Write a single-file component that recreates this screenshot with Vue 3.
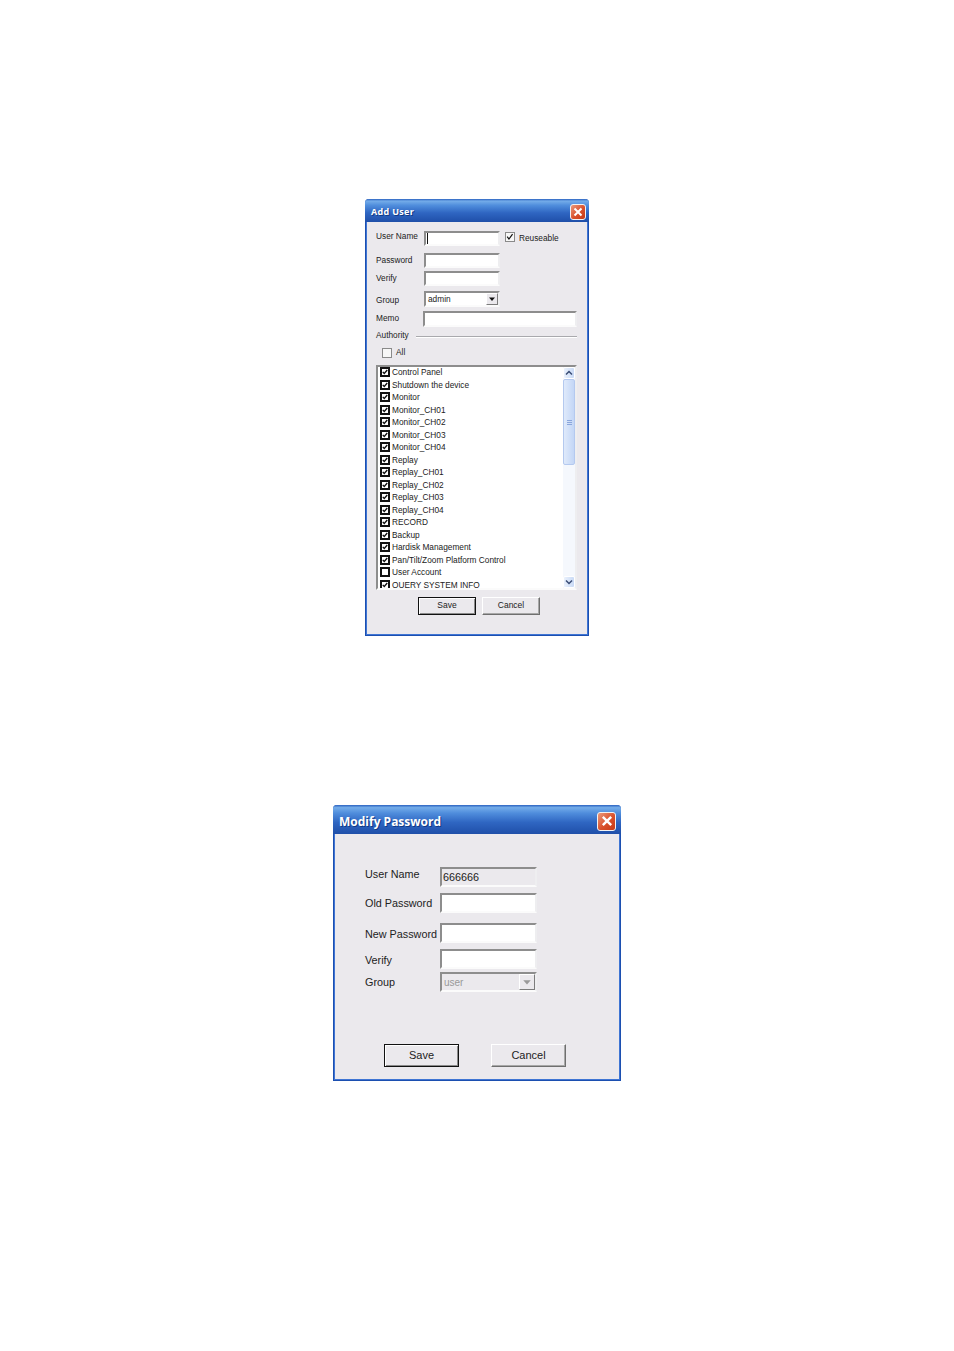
<script setup>
const authorities = [
  { name: 'Control Panel', on: true },
  { name: 'Shutdown the device', on: true },
  { name: 'Monitor', on: true },
  { name: 'Monitor_CH01', on: true },
  { name: 'Monitor_CH02', on: true },
  { name: 'Monitor_CH03', on: true },
  { name: 'Monitor_CH04', on: true },
  { name: 'Replay', on: true },
  { name: 'Replay_CH01', on: true },
  { name: 'Replay_CH02', on: true },
  { name: 'Replay_CH03', on: true },
  { name: 'Replay_CH04', on: true },
  { name: 'RECORD', on: true },
  { name: 'Backup', on: true },
  { name: 'Hardisk Management', on: true },
  { name: 'Pan/Tilt/Zoom Platform Control', on: true },
  { name: 'User Account', on: false },
  { name: 'QUERY SYSTEM INFO', on: true }
]
</script>

<template>
  <div class="page">
    <section class="dialog add-user">
      <header class="titlebar">
        <span class="title">Add User</span>
        <span class="close">
          <svg viewBox="0 0 10 10"><path d="M1.5 1.5l7 7M8.5 1.5l-7 7" /></svg>
        </span>
      </header>
      <div class="body">
        <div class="row row-name">
          <label class="lbl lbl-up">User Name</label>
          <span class="field name-field"><i class="caret"></i></span>
          <span class="check flat on">
            <svg viewBox="0 0 10 10"><path d="M1.5 4.5l2.2 3 4.5-6" /></svg>
          </span>
          <span class="lbl reuse">Reuseable</span>
        </div>
        <div class="row row-pass">
          <label class="lbl">Password</label>
          <span class="field name-field"></span>
        </div>
        <div class="row row-verify">
          <label class="lbl">Verify</label>
          <span class="field name-field"></span>
        </div>
        <div class="row row-group">
          <label class="lbl group-lbl">Group</label>
          <span class="field select">
            <span class="value">admin</span>
            <span class="drop"><svg viewBox="0 0 8 8"><path d="M1 2.5h6L4 6z" /></svg></span>
          </span>
        </div>
        <div class="row row-memo">
          <label class="lbl memo-lbl">Memo</label>
          <span class="field memo-field"></span>
        </div>
        <div class="row row-auth">
          <span class="lbl auth-lbl">Authority</span>
          <span class="rule"></span>
        </div>
        <div class="row row-all">
          <span class="check flat"></span>
          <span class="lbl all-lbl">All</span>
        </div>
        <div class="list">
          <ul class="items">
            <li v-for="item in authorities" :key="item.name" class="item">
              <span class="check" :class="{ on: item.on }">
                <svg v-if="item.on" viewBox="0 0 8 8"><path d="M1 3.8l2 2.2 4-4.6" /></svg>
              </span>
              <span>{{ item.name }}</span>
            </li>
          </ul>
          <div class="scrollbar">
            <span class="sb-btn">
              <svg viewBox="0 0 8 8"><path d="M1 5.5l3-3 3 3" /></svg>
            </span>
            <span class="sb-thumb"><i></i><i></i><i></i></span>
            <span class="sb-rest"></span>
            <span class="sb-btn">
              <svg viewBox="0 0 8 8"><path d="M1 2.5l3 3 3-3" /></svg>
            </span>
          </div>
        </div>
        <div class="buttons">
          <button class="btn default">Save</button>
          <button class="btn">Cancel</button>
        </div>
      </div>
    </section>

    <section class="dialog modify">
      <header class="titlebar">
        <span class="title">Modify Password</span>
        <span class="close">
          <svg viewBox="0 0 10 10"><path d="M1.5 1.5l7 7M8.5 1.5l-7 7" /></svg>
        </span>
      </header>
      <div class="body">
        <div class="row m-name">
          <label class="lbl lbl-up">User Name</label>
          <span class="field disabled">666666</span>
        </div>
        <div class="row m-old">
          <label class="lbl">Old Password</label>
          <span class="field"></span>
        </div>
        <div class="row m-new">
          <label class="lbl">New Password</label>
          <span class="field"></span>
        </div>
        <div class="row m-verify">
          <label class="lbl">Verify</label>
          <span class="field"></span>
        </div>
        <div class="row m-group">
          <label class="lbl">Group</label>
          <span class="field select disabled">
            <span class="value">user</span>
            <span class="drop"><svg viewBox="0 0 8 8"><path d="M1 2.5h6L4 6z" /></svg></span>
          </span>
        </div>
        <div class="buttons">
          <button class="btn default">Save</button>
          <button class="btn">Cancel</button>
        </div>
      </div>
    </section>
  </div>
</template>

<style>
html,
body {
  background: #fff;
}
</style>

<style scoped>
.page {
  height: 1351px;
  overflow: hidden;
  display: flex;
  flex-direction: column;
  align-items: flex-start;
  font-family: 'Liberation Sans', Arial, sans-serif;
  color: #222;
}

.dialog {
  box-sizing: border-box;
  display: flex;
  flex-direction: column;
  background: #ebe9ed;
  border: 1px solid #1c4fb0;
  border-top: 0;
  border-radius: 4px 4px 0 0;
  box-shadow: inset 1px 0 #3f75d4, inset -1px 0 #3f75d4, inset 0 -1px #3f75d4;
}

.titlebar {
  display: flex;
  align-items: center;
  justify-content: space-between;
  margin: 0 -1px;
  border-radius: 4px 4px 0 0;
  background: linear-gradient(#2b62c0 0, #74ace9 9%, #4f8ddc 28%, #2f66c2 60%, #1f4fa9 100%);
  color: #fff;
  font-weight: 700;
}

.title {
  text-shadow: 1px 1px 0 #123a85;
}

.close {
  box-sizing: border-box;
  display: flex;
  align-items: center;
  justify-content: center;
  border: 1px solid #f2f2f2;
  border-radius: 3px;
  background: linear-gradient(135deg, #eb9a7c, #d9502b 55%, #c63a17);
}

.close svg {
  fill: none;
  stroke: #fff;
  stroke-width: 2;
}

.body {
  flex: 1;
  display: flex;
  flex-direction: column;
}

.row {
  display: flex;
  align-items: center;
}

.lbl {
  white-space: nowrap;
}

.lbl-up {
  position: relative;
  top: -2px;
}

.field {
  box-sizing: border-box;
  display: flex;
  align-items: center;
  background: #fff;
  border: 2px solid;
  border-color: #8d8d8d #eeeef0 #fbfbfb #8d8d8d;
}

.field.disabled {
  background: #ebe9ed;
}

.select .value {
  flex: 1;
}

.drop {
  box-sizing: border-box;
  display: flex;
  align-items: center;
  justify-content: center;
  align-self: stretch;
  background: #ebe9ed;
  border: 1px solid;
  border-color: #fff #7c7c7c #7c7c7c #fff;
}

.drop svg {
  fill: #111;
}

.disabled .drop svg {
  fill: #999;
}

/* add user */
.add-user {
  width: 224px;
  height: 437px;
  margin: 199px 0 0 365px;
  font-size: 8.3px;
}

.add-user .titlebar {
  height: 23px;
  padding: 2px 3px 0 6px;
  box-sizing: border-box;
  flex: none;
}

.add-user .title {
  font-family: 'Open Sans', sans-serif;
  font-size: 9px;
  letter-spacing: 0.3px;
}

.add-user .close {
  width: 16px;
  height: 16px;
}

.add-user .close svg {
  width: 10px;
  height: 10px;
}

.add-user .body {
  padding: 9px 10px 0;
}

.add-user .lbl {
  width: 48px;
  padding-bottom: 2px;
}

.add-user .group-lbl {
  padding: 2px 0 0;
}

.name-field {
  width: 76px;
  height: 15px;
  padding-left: 1px;
}

.caret {
  width: 1px;
  height: 11px;
  background: #111;
}

.row-name {
  height: 15px;
}

.row-name .check {
  margin: -3px 0 0 5px;
}

.row-name .check svg {
  stroke-width: 1.5;
}

.add-user .reuse {
  margin-left: 4px;
  width: auto;
}

.row-pass {
  margin-top: 7px;
  height: 15px;
}

.row-verify {
  margin-top: 3px;
  height: 15px;
}

.row-group {
  margin-top: 5px;
  height: 16px;
}

.add-user .select {
  width: 76px;
  height: 16px;
  font-size: 8.3px;
  padding-left: 2px;
}

.add-user .drop {
  width: 12px;
}

.add-user .drop svg {
  width: 8px;
  height: 8px;
}

.row-memo {
  margin-top: 4px;
  height: 16px;
}

.add-user .memo-lbl {
  width: 47px;
}

.memo-field {
  width: 154px;
  height: 16px;
}

.row-auth {
  margin-top: 2px;
  height: 14px;
}

.add-user .auth-lbl {
  width: 40px;
}

.rule {
  width: 161px;
  height: 1px;
  background: #a9a9ad;
  box-shadow: 0 1px #fff;
}

.row-all {
  margin-top: 3px;
  height: 14px;
  padding-left: 6px;
}

.add-user .all-lbl {
  margin-left: 4px;
  width: auto;
}

.check {
  box-sizing: border-box;
  flex: none;
  width: 10px;
  height: 10px;
  display: flex;
  align-items: center;
  justify-content: center;
  background: #fff;
  border: 2px solid #111;
}

.check svg {
  width: 100%;
  height: 100%;
  fill: none;
  stroke: #111;
  stroke-width: 1.8;
}

.check.flat {
  border: 1px solid #8a8a8a;
  background: #f7f7f7;
}

.list {
  box-sizing: border-box;
  display: flex;
  width: 201px;
  height: 225px;
  margin-top: 5px;
  background: #fff;
  border: 2px solid;
  border-color: #8d8d8d #eeeef0 #fbfbfb #8d8d8d;
  overflow: hidden;
}

.items {
  flex: 1;
  margin: -1px 0 0;
  padding: 0 0 0 2px;
  list-style: none;
  overflow: hidden;
}

.item {
  display: flex;
  align-items: center;
  gap: 2px;
  height: 12.5px;
  white-space: nowrap;
}

.scrollbar {
  flex: none;
  width: 12px;
  display: flex;
  flex-direction: column;
  background: #f5f8fd;
}

.sb-btn {
  flex: none;
  height: 12px;
  display: flex;
  align-items: center;
  justify-content: center;
  background: linear-gradient(90deg, #eaf1fc, #c9daf6);
  border: 1px solid #fff;
  box-sizing: border-box;
  border-radius: 2px;
}

.sb-btn svg {
  width: 8px;
  height: 8px;
  fill: none;
  stroke: #3a4d75;
  stroke-width: 1.5;
}

.sb-thumb {
  flex: none;
  height: 86px;
  box-sizing: border-box;
  display: flex;
  flex-direction: column;
  align-items: center;
  justify-content: center;
  gap: 1px;
  background: linear-gradient(90deg, #dfeafb, #c3d6f6);
  border: 1px solid #b4c9ef;
  border-radius: 2px;
}

.sb-thumb i {
  width: 5px;
  height: 1px;
  background: #8aa6dc;
}

.sb-rest {
  flex: 1;
}

.btn {
  box-sizing: border-box;
  padding: 0 0 2px;
  font-family: inherit;
  color: #222;
  background: #ebe9ed;
  border: 1px solid;
  border-color: #fff #6f6f6f #6f6f6f #fff;
  box-shadow: inset -1px -1px #a8a8a8;
}

.btn.default {
  border: 1px solid #111;
  box-shadow: inset 1px 1px #fff, inset -1px -1px #8a8a8a;
}

.add-user .buttons {
  display: flex;
  gap: 6px;
  margin: 7px 0 0 42px;
}

.add-user .btn {
  width: 58px;
  height: 18px;
  font-size: 8.5px;
}

/* modify password */
.modify {
  width: 288px;
  height: 276px;
  margin: 169px 0 0 333px;
  font-size: 10.8px;
}

.modify .titlebar {
  height: 29px;
  padding: 3px 5px 0 6px;
  box-sizing: border-box;
  flex: none;
}

.modify .title {
  font-family: 'Open Sans', sans-serif;
  font-size: 12px;
}

.modify .close {
  width: 19px;
  height: 19px;
}

.modify .close svg {
  width: 12px;
  height: 12px;
}

.modify .body {
  padding: 33px 0 0 31px;
}

.modify .lbl {
  width: 75px;
}

.modify .lbl-up {
  top: -3px;
}

.modify .field {
  width: 97px;
  height: 20px;
  padding-left: 1px;
}

.m-old {
  margin-top: 6px;
}

.m-new {
  margin-top: 10px;
}

.m-verify {
  margin-top: 6px;
}

.m-new .lbl,
.m-verify .lbl {
  padding-top: 2px;
}

.m-group {
  margin-top: 3px;
}

.modify .select {
  color: #999;
  padding-left: 2px;
  font-size: 10px;
}

.modify .drop {
  width: 16px;
}

.modify .drop svg {
  width: 10px;
  height: 10px;
}

.modify .buttons {
  display: flex;
  gap: 32px;
  margin: 52px 0 0 19px;
}

.modify .btn {
  width: 75px;
  height: 23px;
  font-size: 11px;
}
</style>
